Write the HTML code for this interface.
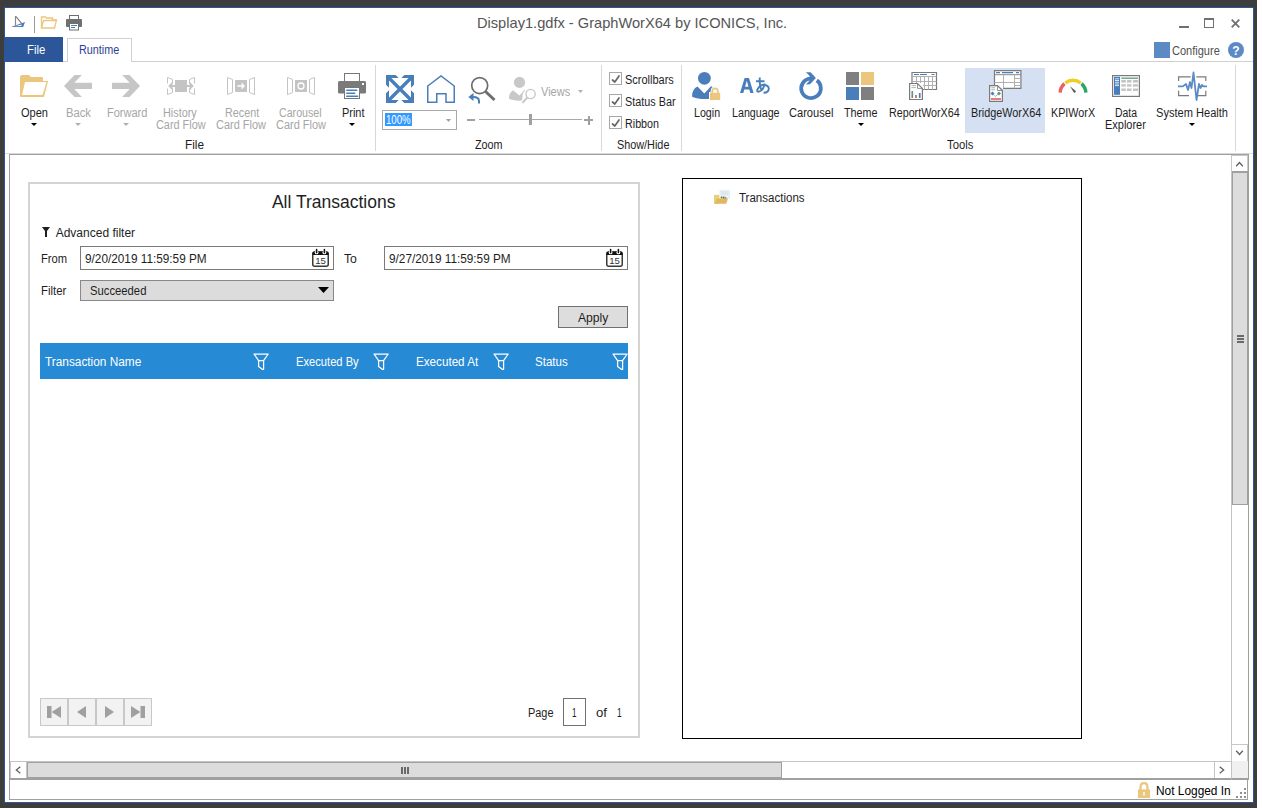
<!DOCTYPE html>
<html><head><meta charset="utf-8"><title>GraphWorX64</title><style>
*{margin:0;padding:0;box-sizing:border-box}
html,body{width:1262px;height:808px;overflow:hidden;background:#3d3d3d;font-family:'Liberation Sans', sans-serif}
body>div,body>svg,body>span{position:absolute}
.t{position:absolute;white-space:pre;line-height:1;transform-origin:0 0}
svg{overflow:visible}
</style></head><body>
<div style="left:1257px;top:0px;width:5px;height:808px;background:#fff"></div>
<div style="left:4px;top:7px;width:1250px;height:796px;background:#fff;border:1px solid #2b579a"></div>
<svg style="left:11px;top:15px;" width="15" height="13" viewBox="0 0 15 13"><path d="M4.5 1 V10.5" stroke="#8a8a8a" stroke-width="1.2"/><path d="M5 1.5 L11 9" stroke="#6a6a6a" stroke-width="1.1"/><path d="M0 12 L14 7 L12.2 12 Z M4 11.3 L10.8 9.6 L10.2 11 Z" fill="#4a7ebb" fill-rule="evenodd"/></svg>
<div style="left:34px;top:16px;width:1px;height:17px;background:#9a9a9a"></div>
<svg style="left:41px;top:16px;" width="17" height="13" viewBox="0 0 17 13"><path d="M0.5 12 V1 H4.5 L5.5 2 H11.5 V4 H15.5 L13.5 12 Z" fill="none" stroke="#ebc67c" stroke-width="1.3"/><path d="M0.5 12 L2.5 4.5 H15.5" fill="none" stroke="#ebc67c" stroke-width="1.3"/></svg>
<svg style="left:66px;top:15px;" width="17" height="16" viewBox="0 0 17 16"><rect x="3.5" y="0.5" width="9" height="4" fill="#fff" stroke="#6f6f6f"/><rect x="0" y="4" width="16" height="8" rx="1" fill="#6f6f6f"/><rect x="3.5" y="8.5" width="9" height="6.5" fill="#fff" stroke="#6f6f6f"/><path d="M5 10.5 H11 M5 12.5 H9" stroke="#4a7ebb"/></svg>
<span class="t" style="left:477.40px;top:15.00px;font-size:15px;color:#555555;transform:scaleX(0.9749);">Display1.gdfx - GraphWorX64 by ICONICS, Inc.</span>
<div style="left:1179px;top:26px;width:10px;height:2px;background:#707070"></div>
<div style="left:1204px;top:18px;width:10px;height:10px;border:1px solid #707070;border-top-width:2px"></div>
<svg style="left:1231px;top:19px;" width="9" height="9" viewBox="0 0 9 9"><path d="M0.7 0.7 L8.3 8.3 M8.3 0.7 L0.7 8.3" stroke="#707070" stroke-width="1.8"/></svg>
<div style="left:5px;top:61px;width:1248px;height:1px;background:#d0d0d0"></div>
<div style="left:5px;top:37px;width:58px;height:25px;background:#2b579a"></div>
<span class="t" style="left:26.70px;top:44.00px;font-size:12px;color:#fff;transform:scaleX(0.9460);">File</span>
<div style="left:67px;top:38px;width:65px;height:24px;background:#fff;border:1px solid #d0d0d0;border-bottom:none"></div>
<span class="t" style="left:78.70px;top:44.00px;font-size:12px;color:#2e3f96;transform:scaleX(0.9018);">Runtime</span>
<div style="left:1154px;top:42px;width:16px;height:16px;background:#5b8ac4"></div>
<span class="t" style="left:1172.40px;top:45.00px;font-size:12px;color:#505050;transform:scaleX(0.9187);">Configure</span>
<svg style="left:1228px;top:42px;" width="16" height="16" viewBox="0 0 16 16"><circle cx="8" cy="8" r="8" fill="#5b8ac4"/><text x="8" y="12.6" text-anchor="middle" font-family="Liberation Sans" font-weight="bold" font-size="12" fill="#fff">?</text></svg>
<div style="left:5px;top:153px;width:1248px;height:1px;background:#d8d8d8"></div>
<div style="left:375px;top:65px;width:1px;height:86px;background:#d8d8d8"></div>
<div style="left:601px;top:65px;width:1px;height:86px;background:#d8d8d8"></div>
<div style="left:681px;top:65px;width:1px;height:86px;background:#d8d8d8"></div>
<div style="left:1235px;top:65px;width:1px;height:86px;background:#d8d8d8"></div>
<svg style="left:20px;top:75px;" width="29" height="23" viewBox="0 0 29 23"><path d="M0 2 Q0 0 2 0 H9 L11 2 H22 Q23 2 23 3 V6 H28 L24 22 H1 Q0 22 0 21 Z" fill="#ebc67c"/><path d="M5 7 H26.5 L22.5 20 H2 Z" fill="#fff"/></svg>
<span class="t" style="left:20.90px;top:107.00px;font-size:12px;color:#1e1e1e;transform:scaleX(0.9196);">Open</span>
<svg style="left:30.5px;top:123px;" width="6" height="3" viewBox="0 0 6 3"><path d="M0 0 H6 L3 3 Z" fill="#000"/></svg>
<svg style="left:64px;top:75px;" width="28" height="22" viewBox="0 0 28 22"><path d="M10.5 0 H17.9 L10.3 7.8 H28 V13.9 H10.3 L17.9 22 H10.5 L0 11 Z" fill="#c6c6c6"/></svg>
<span class="t" style="left:65.80px;top:107.00px;font-size:12px;color:#a6a6a6;transform:scaleX(0.9368);">Back</span>
<svg style="left:75px;top:123px;" width="6" height="3" viewBox="0 0 6 3"><path d="M0 0 H6 L3 3 Z" fill="#b0b0b0"/></svg>
<svg style="left:112px;top:75px;" width="28" height="22" viewBox="0 0 28 22"><path d="M17.5 0 H10.1 L17.7 7.8 H0 V13.9 H17.7 L10.1 22 H17.5 L28 11 Z" fill="#c6c6c6"/></svg>
<span class="t" style="left:106.60px;top:107.00px;font-size:12px;color:#a6a6a6;transform:scaleX(0.9179);">Forward</span>
<svg style="left:123px;top:123px;" width="6" height="3" viewBox="0 0 6 3"><path d="M0 0 H6 L3 3 Z" fill="#b0b0b0"/></svg>
<svg style="left:167px;top:77px;" width="28" height="18" viewBox="0 0 28 18"><path d="M0.5 0.5 L5.5 2.5 V15.5 L0.5 17.5 Z M27.5 0.5 L22.5 2.5 V15.5 L27.5 17.5 Z" fill="none" stroke="#c4c4c4"/><rect x="8" y="3" width="12" height="12" fill="#c4c4c4"/><path d="M0 9 H8 M20 9 H28" stroke="#fff" stroke-width="5"/><path d="M2.5 9 H25.5 M5.5 6 L2.5 9 L5.5 12 M22.5 6 L25.5 9 L22.5 12" stroke="#c4c4c4" stroke-width="1.8" fill="none"/></svg>
<span class="t" style="left:163.20px;top:107.00px;font-size:12px;color:#a6a6a6;transform:scaleX(0.9051);">History</span>
<span class="t" style="left:156.00px;top:119.00px;font-size:12px;color:#a6a6a6;transform:scaleX(0.9070);">Card Flow</span>
<svg style="left:227px;top:77px;" width="28" height="18" viewBox="0 0 28 18"><path d="M0.5 0.5 L5.5 2.5 V15.5 L0.5 17.5 Z M27.5 0.5 L22.5 2.5 V15.5 L27.5 17.5 Z" fill="none" stroke="#c4c4c4"/><rect x="8" y="3" width="12" height="12" fill="#c4c4c4"/><path d="M10.5 9 H17 M14.5 6.5 L17 9 L14.5 11.5" stroke="#fff" stroke-width="1.4" fill="none"/></svg>
<span class="t" style="left:224.60px;top:107.00px;font-size:12px;color:#a6a6a6;transform:scaleX(0.8993);">Recent</span>
<span class="t" style="left:216.00px;top:119.00px;font-size:12px;color:#a6a6a6;transform:scaleX(0.9125);">Card Flow</span>
<svg style="left:287px;top:77px;" width="28" height="18" viewBox="0 0 28 18"><path d="M0.5 0.5 L5.5 2.5 V15.5 L0.5 17.5 Z M27.5 0.5 L22.5 2.5 V15.5 L27.5 17.5 Z" fill="none" stroke="#c4c4c4"/><rect x="8" y="3" width="12" height="12" fill="#c4c4c4"/><circle cx="14" cy="9" r="3" stroke="#fff" stroke-width="1.3" fill="none"/></svg>
<span class="t" style="left:279.40px;top:107.00px;font-size:12px;color:#a6a6a6;transform:scaleX(0.8869);">Carousel</span>
<span class="t" style="left:276.00px;top:119.00px;font-size:12px;color:#a6a6a6;transform:scaleX(0.9143);">Card Flow</span>
<svg style="left:338px;top:73px;" width="28" height="27" viewBox="0 0 28 27"><rect x="6.5" y="0.5" width="15" height="8" fill="#fff" stroke="#777"/><rect x="0" y="8" width="28" height="12.6" rx="1.5" fill="#7a7a7a"/><rect x="24" y="10" width="2" height="2" fill="#fff"/><rect x="6.5" y="14.5" width="15" height="11" fill="#fff" stroke="#777"/><path d="M8.8 17.3 H18.7 M8.8 20.3 H16.7 M8.8 23.3 H19.7" stroke="#4a7ebb" stroke-width="1.6" stroke-linecap="round"/></svg>
<span class="t" style="left:341.50px;top:107.00px;font-size:12px;color:#1e1e1e;transform:scaleX(0.9114);">Print</span>
<svg style="left:349px;top:123px;" width="6" height="3" viewBox="0 0 6 3"><path d="M0 0 H6 L3 3 Z" fill="#000"/></svg>
<span class="t" style="left:185.00px;top:139.00px;font-size:12px;color:#1e1e1e;transform:scaleX(0.9822);">File</span>
<svg style="left:386px;top:75px;" width="28" height="28" viewBox="0 0 28 28"><g fill="#4a7ebb"><path d="M0 0 H9.7 L12.7 3 H3 V12.7 L0 9.7 Z"/><path d="M28 0 H18.3 L15.3 3 H25 V12.7 L28 9.7 Z"/><path d="M0 28 H9.7 L12.7 25 H3 V15.3 L0 18.3 Z"/><path d="M28 28 H18.3 L15.3 25 H25 V15.3 L28 18.3 Z"/></g><path d="M1.5 1.5 L26.5 26.5 M26.5 1.5 L1.5 26.5" stroke="#4a7ebb" stroke-width="3.4"/></svg>
<svg style="left:427px;top:75px;" width="28" height="28" viewBox="0 0 28 28"><path d="M0.75 27.25 V11 L14 0.9 L27.25 11 V27.25 H19 V18.75 H9.75 V27.25 Z" fill="none" stroke="#4a7ebb" stroke-width="1.5" stroke-linejoin="miter"/></svg>
<svg style="left:468px;top:76px;" width="29" height="29" viewBox="0 0 29 29"><circle cx="11.7" cy="9.6" r="8" fill="none" stroke="#6e6e6e" stroke-width="1.7"/><path d="M17.5 15.5 L26.5 24" stroke="#6e6e6e" stroke-width="3"/><path d="M11 27.5 V25 Q11 21 5 21" fill="none" stroke="#4a7ebb" stroke-width="2"/><path d="M0.3 21 L5.5 17 V25 Z" fill="#4a7ebb"/></svg>
<svg style="left:509px;top:76px;" width="28" height="28" viewBox="0 0 28 28"><circle cx="10.5" cy="6.4" r="5.6" fill="#c8c8c8"/><path d="M0 22.5 Q0 16.5 4 14.2 L10.5 19.5 L15.5 14 Q16 14.2 16.5 14.5 Q13 17 13.5 21 L13 24.5 Q10.5 24.8 7 24.5 Q0 23.5 0 22.5 Z" fill="#c8c8c8"/><circle cx="21.6" cy="18" r="4.6" fill="#fff" stroke="#c8c8c8" stroke-width="1.4"/><path d="M18.3 21.5 L13.5 26.8" stroke="#c8c8c8" stroke-width="2"/></svg>
<span class="t" style="left:540.80px;top:86.00px;font-size:12px;color:#a6a6a6;transform:scaleX(0.9183);">Views</span>
<svg style="left:578px;top:90px;" width="5" height="3" viewBox="0 0 5 3"><path d="M0 0 H5 L2.5 3 Z" fill="#b0b0b0"/></svg>
<div style="left:382px;top:110px;width:75px;height:20px;background:#fff;border:1px solid #a8a8a8"></div>
<div style="left:385px;top:113px;width:27px;height:13px;background:#3399ff"></div>
<span class="t" style="left:386.30px;top:114.00px;font-size:12.5px;color:#fff;transform:scaleX(0.7691);">100%</span>
<svg style="left:446px;top:119px;" width="5" height="3" viewBox="0 0 5 3"><path d="M0 0 H5 L2.5 3 Z" fill="#a0a0a0"/></svg>
<div style="left:467px;top:119px;width:8px;height:2px;background:#a0a0a0"></div>
<div style="left:479px;top:119px;width:103px;height:1px;background:#a8a8a8"></div>
<div style="left:529px;top:114px;width:3px;height:11px;background:#a0a0a0"></div>
<div style="left:584px;top:119px;width:9px;height:2px;background:#a0a0a0"></div>
<div style="left:587.5px;top:115.5px;width:2px;height:9px;background:#a0a0a0"></div>
<span class="t" style="left:475.00px;top:139.00px;font-size:12px;color:#1e1e1e;transform:scaleX(0.8994);">Zoom</span>
<div style="left:609px;top:72px;width:13px;height:13px;background:#fff;border:1px solid #a8a8a8"></div>
<svg style="left:611px;top:75px;" width="9" height="8" viewBox="0 0 9 8"><path d="M1.5 5 L3.8 7 L8 1" fill="none" stroke="#666" stroke-width="1.7" stroke-linecap="round" stroke-linejoin="round"/></svg>
<div style="left:609px;top:94px;width:13px;height:13px;background:#fff;border:1px solid #a8a8a8"></div>
<svg style="left:611px;top:97px;" width="9" height="8" viewBox="0 0 9 8"><path d="M1.5 5 L3.8 7 L8 1" fill="none" stroke="#666" stroke-width="1.7" stroke-linecap="round" stroke-linejoin="round"/></svg>
<div style="left:609px;top:116px;width:13px;height:13px;background:#fff;border:1px solid #a8a8a8"></div>
<svg style="left:611px;top:119px;" width="9" height="8" viewBox="0 0 9 8"><path d="M1.5 5 L3.8 7 L8 1" fill="none" stroke="#666" stroke-width="1.7" stroke-linecap="round" stroke-linejoin="round"/></svg>
<span class="t" style="left:625.30px;top:74.00px;font-size:12px;color:#1e1e1e;transform:scaleX(0.9146);">Scrollbars</span>
<span class="t" style="left:625.30px;top:96.00px;font-size:12px;color:#1e1e1e;transform:scaleX(0.9013);">Status Bar</span>
<span class="t" style="left:625.30px;top:118.00px;font-size:12px;color:#1e1e1e;transform:scaleX(0.8940);">Ribbon</span>
<span class="t" style="left:616.60px;top:139.00px;font-size:12px;color:#1e1e1e;transform:scaleX(0.9030);">Show/Hide</span>
<svg style="left:692px;top:72px;" width="29" height="29" viewBox="0 0 29 29"><circle cx="12.4" cy="6.3" r="6.4" fill="#4a7ebb"/><path d="M0 24.5 Q0 17 5.5 14.5 L12.3 21.5 L19 14.2 Q20.6 14.6 21.3 15.6 L17.6 27 Q10 27.2 6 26.4 Q1 25.5 0 24.5 Z" fill="#4a7ebb"/><rect x="17" y="20" width="12" height="9" fill="#fff"/><path d="M20.3 21 V19.5 Q20.3 16.3 23.1 16.3 Q25.9 16.3 25.9 19.5 V21" fill="none" stroke="#fff" stroke-width="3.4"/><path d="M20.3 21 V19.5 Q20.3 16.3 23.1 16.3 Q25.9 16.3 25.9 19.5 V21" fill="none" stroke="#ebc67c" stroke-width="1.7"/><rect x="18" y="20.8" width="10.2" height="7.2" fill="#ebc67c"/></svg>
<span class="t" style="left:693.50px;top:107.00px;font-size:12px;color:#1e1e1e;transform:scaleX(0.8885);">Login</span>
<svg style="left:740px;top:77px;" width="30" height="17" viewBox="0 0 30 17"><path d="M4.6 1 H9 L13.6 16 H10.3 L9.3 12.5 H4.3 L3.3 16 H0 Z M5.1 9.8 H8.5 L6.8 3.8 Z" fill="#4a7ebb" fill-rule="evenodd"/><path d="M16 4.2 H24.5 M19.8 0.5 Q19.2 9 21.5 13.5 M25.5 7.5 Q21 7 18 11.5 Q16 14.8 18.5 14.8 Q23 14 24.5 7.5 M23.5 8 Q28.8 8 28.8 11.8 Q28.5 15.5 23.5 15.8" fill="none" stroke="#4a7ebb" stroke-width="1.9"/></svg>
<span class="t" style="left:732.30px;top:107.00px;font-size:12px;color:#1e1e1e;transform:scaleX(0.8897);">Language</span>
<svg style="left:795px;top:68px;" width="33" height="36" viewBox="0 0 33 36"><path d="M21.76 12.37 A9.8 9.8 0 1 1 15.15 10.54" fill="none" stroke="#4a7ebb" stroke-width="3.8"/><path d="M10.9 4.2 L15.6 4.2 L20.9 10 L15 16.3 L10.9 16.5 L14.2 12.9 L14.7 8 Z" fill="#4a7ebb"/></svg>
<span class="t" style="left:789.00px;top:107.00px;font-size:12px;color:#1e1e1e;transform:scaleX(0.9244);">Carousel</span>
<svg style="left:846px;top:72px;" width="28" height="28" viewBox="0 0 28 28"><rect x="0" y="0" width="13" height="13" fill="#7f7f7f"/><rect x="15" y="0" width="13" height="13" fill="#ebc67c"/><rect x="0" y="15" width="13" height="13" fill="#4a7ebb"/><rect x="15" y="15" width="13" height="13" fill="#7f7f7f"/></svg>
<span class="t" style="left:843.50px;top:107.00px;font-size:12px;color:#1e1e1e;transform:scaleX(0.8967);">Theme</span>
<svg style="left:857.5px;top:123px;" width="6" height="3" viewBox="0 0 6 3"><path d="M0 0 H6 L3 3 Z" fill="#000"/></svg>
<svg style="left:909px;top:71px;" width="30" height="30" viewBox="0 0 30 30"><path d="M3 12 V1.5 H27.5 V18.5 H14" fill="#fff" stroke="#7a7a7a" stroke-width="1.2"/><path d="M3 5.5 H27.5 M3 10.5 H27.5 M14 14.5 H27.5 M7.5 5.5 V12 M11.5 5.5 V12 M15.5 5.5 V18.5 M19.5 5.5 V18.5 M23.5 5.5 V18.5" stroke="#b0b0b0" stroke-width="1"/><path d="M5 3.5 H10 M11 3.5 H18 M22.5 3.5 H25.5" stroke="#4a7ebb" stroke-width="1.1"/><path d="M0.6 12.5 H8.5 L13.4 17.4 V28.5 H0.6 Z" fill="#fff" stroke="#7a7a7a" stroke-width="1.2"/><path d="M8.5 12.5 V17.4 H13.4" fill="none" stroke="#7a7a7a" stroke-width="0.8"/><path d="M2.5 14.6 H7 M2.5 16.6 H7" stroke="#b0b0b0" stroke-width="0.9"/><path d="M3.3 20 V27" stroke="#5c9a7c" stroke-width="1.7"/><path d="M7 24 V27" stroke="#d86060" stroke-width="1.7"/><path d="M10.7 22 V27" stroke="#4a7ebb" stroke-width="1.7"/></svg>
<span class="t" style="left:888.80px;top:107.00px;font-size:12px;color:#1e1e1e;transform:scaleX(0.8932);">ReportWorX64</span>
<div style="left:965px;top:68px;width:80px;height:65px;background:#d5e1f2"></div>
<svg style="left:989px;top:70px;" width="33" height="33" viewBox="0 0 33 33"><path d="M5.5 15 V0.6 H31.9 V18.4 H14" fill="#fff" stroke="#7a7a7a" stroke-width="1.2"/><path d="M5.5 4.7 H31.9" stroke="#7a7a7a" stroke-width="0.9"/><path d="M5.5 12.5 H31.9 M14.5 4.7 V18.4 M25.5 4.7 V18.4 M25.5 8.5 H31.9 M25.5 15.5 H31.9" stroke="#b0b0b0" stroke-width="1"/><path d="M7 2.6 H11 M13 2.6 H24 M27 2.6 H30" stroke="#4a7ebb" stroke-width="1.1"/><path d="M0.6 15.6 H8.5 L13.4 20.5 V31.4 H0.6 Z" fill="#fff" stroke="#7a7a7a" stroke-width="1.2"/><path d="M8.5 15.6 V20.5 H13.4" fill="none" stroke="#7a7a7a" stroke-width="0.8"/><path d="M2.3 17.8 H6 M2.3 19.8 H6" stroke="#b0b0b0" stroke-width="1.1"/><path d="M3.5 23.5 L6.3 26.5 L10 23.5" stroke="#a8a8a8" stroke-width="0.9" fill="none"/><path d="M3.5 21.5 L5.5 23.5 L3.5 25.5 L1.5 23.5 Z" fill="#4a7ebb"/><path d="M10 21.5 L12 23.5 L10 25.5 L8 23.5 Z" fill="#5c9a7c"/><path d="M1.8 29 H12" stroke="#d86060" stroke-width="1.6"/></svg>
<span class="t" style="left:970.60px;top:107.00px;font-size:12px;color:#1e1e1e;transform:scaleX(0.9020);">BridgeWorX64</span>
<svg style="left:1058px;top:78px;" width="30" height="16" viewBox="0 0 30 16"><path d="M2.2 14.6 A12.3 12.3 0 0 1 6.5 5.6" fill="none" stroke="#e86262" stroke-width="3.4"/><path d="M7.3 5 A12.3 12.3 0 0 1 22.7 5" fill="none" stroke="#f2cc20" stroke-width="3.4"/><path d="M23.5 5.6 A12.3 12.3 0 0 1 27.8 14.6" fill="none" stroke="#25a866" stroke-width="3.4"/><path d="M12 8.3 L17.8 13 Q18 15 16 14.8 Z" fill="#555"/></svg>
<span class="t" style="left:1051.30px;top:107.00px;font-size:12px;color:#1e1e1e;transform:scaleX(0.8977);">KPIWorX</span>
<svg style="left:1112px;top:75px;" width="28" height="22" viewBox="0 0 28 22"><rect x="0.6" y="0.6" width="26.8" height="20.8" fill="#fff" stroke="#7a7a7a" stroke-width="1.2"/><rect x="2" y="1.8" width="6" height="18" fill="#4a7ebb"/><path d="M3 3.8 H7 M3 5.5 H7 M3 7.2 H7 M3 9 H7 M3 10.6 H7" stroke="#fff" stroke-width="0.8"/><path d="M9.3 3.2 H26" stroke="#5c9a7c" stroke-width="1.3"/><g fill="#c4c4c4"><rect x="9.3" y="5" width="4.5" height="2.6"/><rect x="15" y="5" width="4.5" height="2.6"/><rect x="21" y="5" width="5" height="2.6"/><rect x="9.3" y="9.2" width="4.5" height="2.4"/><rect x="15" y="9.2" width="4.5" height="2.4"/><rect x="21" y="9.2" width="5" height="2.4"/><rect x="9.3" y="13.5" width="4.5" height="2.5"/><rect x="15" y="13.5" width="4.5" height="2.5"/><rect x="21" y="13.5" width="5" height="2.5"/></g></svg>
<span class="t" style="left:1114.50px;top:107.00px;font-size:12px;color:#1e1e1e;transform:scaleX(0.8675);">Data</span>
<span class="t" style="left:1105.20px;top:119.00px;font-size:12px;color:#1e1e1e;transform:scaleX(0.9130);">Explorer</span>
<svg style="left:1178px;top:72px;" width="29" height="29" viewBox="0 0 29 29"><path d="M0.6 9 V4.8 H12.7 M18.3 4.8 H27.8 V9 M0.6 18.7 V23.6 H11 M20 23.6 H27.8 V18.7" fill="none" stroke="#7a7a7a" stroke-width="1.2"/><path d="M0 14.4 H4.8 L8 12 L10 18 L12 10 L13.5 16 L15.5 0.5 L18.5 28 L21 12 L22.5 16 L24 13 L25.5 14.4 H29" fill="none" stroke="#5b8ac4" stroke-width="1.8" stroke-linejoin="round"/></svg>
<span class="t" style="left:1156.00px;top:107.00px;font-size:12px;color:#1e1e1e;transform:scaleX(0.9227);">System Health</span>
<svg style="left:1188.5px;top:123px;" width="6" height="3" viewBox="0 0 6 3"><path d="M0 0 H6 L3 3 Z" fill="#000"/></svg>
<span class="t" style="left:946.70px;top:139.00px;font-size:12px;color:#1e1e1e;transform:scaleX(0.9388);">Tools</span>
<div style="left:9px;top:154px;width:1240px;height:626px;border:1px solid #a0a0a0;border-bottom:none;background:#fff"></div>
<div style="left:28px;top:182px;width:612px;height:556px;border:2px solid #d4d4d4"></div>
<span class="t" style="left:271.90px;top:194.00px;font-size:17.5px;color:#1e1e1e;">All Transactions</span>
<svg style="left:42px;top:227px;" width="8" height="10" viewBox="0 0 8 10"><path d="M0 0 H8 L5 4 V10 H3 V4 Z" fill="#1e1e1e"/></svg>
<span class="t" style="left:55.70px;top:227.00px;font-size:12px;color:#1e1e1e;">Advanced filter</span>
<span class="t" style="left:40.60px;top:253.00px;font-size:12px;color:#1e1e1e;transform:scaleX(0.9321);">From</span>
<div style="left:80px;top:246px;width:254px;height:24px;border:1px solid #7a7a7a;background:#fff"></div>
<span class="t" style="left:85.30px;top:253.00px;font-size:12px;color:#1e1e1e;transform:scaleX(0.9824);">9/20/2019 11:59:59 PM</span>
<svg style="left:312px;top:249px;" width="17" height="18" viewBox="0 0 17 18"><rect x="0.75" y="3" width="15.5" height="14.2" rx="2" fill="#fff" stroke="#3a3a3a" stroke-width="1.5"/><path d="M0.5 6 V4.5 Q0.5 2.5 2.5 2.5 H14.5 Q16.5 2.5 16.5 4.5 V6 Z" fill="#111"/><circle cx="4.6" cy="3.4" r="1.9" fill="#fff"/><circle cx="12.4" cy="3.4" r="1.9" fill="#fff"/><path d="M4.6 0.6 V3.6 M12.4 0.6 V3.6" stroke="#111" stroke-width="1.6" stroke-linecap="round"/><text x="8.6" y="15" text-anchor="middle" font-family="Liberation Sans" font-size="9.6" fill="#333">15</text></svg>
<span class="t" style="left:344.30px;top:253.00px;font-size:12px;color:#1e1e1e;transform:scaleX(1.0167);">To</span>
<div style="left:384px;top:246px;width:244px;height:24px;border:1px solid #7a7a7a;background:#fff"></div>
<span class="t" style="left:389.30px;top:253.00px;font-size:12px;color:#1e1e1e;transform:scaleX(0.9824);">9/27/2019 11:59:59 PM</span>
<svg style="left:606px;top:249px;" width="17" height="18" viewBox="0 0 17 18"><rect x="0.75" y="3" width="15.5" height="14.2" rx="2" fill="#fff" stroke="#3a3a3a" stroke-width="1.5"/><path d="M0.5 6 V4.5 Q0.5 2.5 2.5 2.5 H14.5 Q16.5 2.5 16.5 4.5 V6 Z" fill="#111"/><circle cx="4.6" cy="3.4" r="1.9" fill="#fff"/><circle cx="12.4" cy="3.4" r="1.9" fill="#fff"/><path d="M4.6 0.6 V3.6 M12.4 0.6 V3.6" stroke="#111" stroke-width="1.6" stroke-linecap="round"/><text x="8.6" y="15" text-anchor="middle" font-family="Liberation Sans" font-size="9.6" fill="#333">15</text></svg>
<span class="t" style="left:40.60px;top:285.00px;font-size:12px;color:#1e1e1e;transform:scaleX(0.9486);">Filter</span>
<div style="left:80px;top:280px;width:254px;height:21px;border:1px solid #888;background:#dcdcdc"></div>
<span class="t" style="left:90.00px;top:285.00px;font-size:12px;color:#1e1e1e;transform:scaleX(0.9393);">Succeeded</span>
<svg style="left:318px;top:287px;" width="11" height="6" viewBox="0 0 11 6"><path d="M0 0 H11 L5.5 6 Z" fill="#000"/></svg>
<div style="left:558px;top:306px;width:70px;height:22px;border:1px solid #707070;background:#dddddd"></div>
<span class="t" style="left:577.80px;top:312.00px;font-size:12px;color:#1e1e1e;transform:scaleX(1.0123);">Apply</span>
<div style="left:40px;top:343px;width:588px;height:36px;background:#278ad4"></div>
<div style="left:40px;top:343px;width:588px;height:36px;overflow:hidden"><svg style="position:absolute;left:213px;top:10px" width="17" height="18" viewBox="0 0 17 18"><path d="M1 1 H15.2 L10.6 7.6 H5.6 Z M5.6 7.6 V13.4 L9.6 16.4 H10.6 V7.6" fill="none" stroke="#fff" stroke-width="1.25" stroke-linejoin="round"/></svg><svg style="position:absolute;left:333px;top:10px" width="17" height="18" viewBox="0 0 17 18"><path d="M1 1 H15.2 L10.6 7.6 H5.6 Z M5.6 7.6 V13.4 L9.6 16.4 H10.6 V7.6" fill="none" stroke="#fff" stroke-width="1.25" stroke-linejoin="round"/></svg><svg style="position:absolute;left:453px;top:10px" width="17" height="18" viewBox="0 0 17 18"><path d="M1 1 H15.2 L10.6 7.6 H5.6 Z M5.6 7.6 V13.4 L9.6 16.4 H10.6 V7.6" fill="none" stroke="#fff" stroke-width="1.25" stroke-linejoin="round"/></svg><svg style="position:absolute;left:572px;top:10px" width="17" height="18" viewBox="0 0 17 18"><path d="M1 1 H15.2 L10.6 7.6 H5.6 Z M5.6 7.6 V13.4 L9.6 16.4 H10.6 V7.6" fill="none" stroke="#fff" stroke-width="1.25" stroke-linejoin="round"/></svg></div>
<span class="t" style="left:45.00px;top:356.00px;font-size:12px;color:#fff;transform:scaleX(0.9867);">Transaction Name</span>
<span class="t" style="left:295.70px;top:356.00px;font-size:12px;color:#fff;transform:scaleX(0.9306);">Executed By</span>
<span class="t" style="left:415.50px;top:356.00px;font-size:12px;color:#fff;transform:scaleX(0.9712);">Executed At</span>
<span class="t" style="left:534.70px;top:356.00px;font-size:12px;color:#fff;transform:scaleX(0.9638);">Status</span>
<div style="left:40px;top:698px;width:112px;height:28px;border:1px solid #c8c8c8;background:#f2f2f2"></div>
<div style="left:67px;top:698px;width:2px;height:28px;background:#c8c8c8"></div>
<div style="left:95px;top:698px;width:2px;height:28px;background:#c8c8c8"></div>
<div style="left:123px;top:698px;width:2px;height:28px;background:#c8c8c8"></div>
<svg style="left:47px;top:706px;" width="15" height="12" viewBox="0 0 15 12"><rect x="0" y="0" width="4.5" height="12" fill="#a0a0a0"/><path d="M14 0 V12 L4.5 6 Z" fill="#a0a0a0"/></svg>
<svg style="left:77px;top:706px;" width="9" height="12" viewBox="0 0 9 12"><path d="M9 0 V12 L0 6 Z" fill="#a0a0a0"/></svg>
<svg style="left:105px;top:706px;" width="9" height="12" viewBox="0 0 9 12"><path d="M0 0 V12 L9 6 Z" fill="#a0a0a0"/></svg>
<svg style="left:130px;top:706px;" width="15" height="12" viewBox="0 0 15 12"><rect x="10.5" y="0" width="4.5" height="12" fill="#a0a0a0"/><path d="M1 0 V12 L10.5 6 Z" fill="#a0a0a0"/></svg>
<span class="t" style="left:527.70px;top:707.00px;font-size:12px;color:#1e1e1e;transform:scaleX(0.9097);">Page</span>
<div style="left:563px;top:698px;width:23px;height:28px;border:1px solid #707070;background:#fff"></div>
<span class="t" style="left:572.00px;top:707.00px;font-size:12px;color:#1e1e1e;transform:scaleX(0.6729);">1</span>
<span class="t" style="left:595.70px;top:707.00px;font-size:12px;color:#1e1e1e;transform:scaleX(1.0983);">of</span>
<span class="t" style="left:617.30px;top:707.00px;font-size:12px;color:#1e1e1e;transform:scaleX(0.7028);">1</span>
<div style="left:682px;top:178px;width:400px;height:561px;border:1px solid #000"></div>
<svg style="left:710px;top:185px;" width="26" height="22" viewBox="0 0 26 22"><rect x="4" y="9.8" width="5.5" height="9" fill="#e6d27a"/><path d="M9.5 4.8 H20 V13.8 H9.5 Z" fill="#e9f0f5"/><path d="M11 7 H18.5 M11 9 H18.5" stroke="#cfdbe4" stroke-width="0.8"/><circle cx="11.6" cy="12.4" r="1" fill="#2a9a4a"/><rect x="12.9" y="11.6" width="1.6" height="2.4" fill="#d04545"/><circle cx="15.6" cy="13" r="0.9" fill="#3a9ad0"/><path d="M6.8 13.6 H18 L16.2 18.8 H4.5 Z" fill="#e0b860"/></svg>
<span class="t" style="left:739.20px;top:192.00px;font-size:12px;color:#1e1e1e;transform:scaleX(0.9612);">Transactions</span>
<div style="left:1231px;top:155px;width:18px;height:606px;background:#fff;border-left:1px solid #c4c4c4;border-right:1px solid #a0a0a0"></div>
<div style="left:1231px;top:155px;width:17px;height:17px;background:#fff;border:1px solid #c8c8c8;border-bottom:none"></div>
<svg style="left:1235px;top:161px;" width="9" height="6" viewBox="0 0 9 6"><path d="M1.2 5.2 L4.5 1.5 L7.8 5.2" fill="none" stroke="#606060" stroke-width="1.3"/></svg>
<div style="left:1232px;top:171px;width:16px;height:334px;background:#dcdcdc;border:1px solid #a0a0a0;border-width:2px 1px 1px 1px"></div>
<div style="left:1236.5px;top:335px;width:7px;height:1.6px;background:#6a6a6a"></div>
<div style="left:1236.5px;top:338px;width:7px;height:1.6px;background:#6a6a6a"></div>
<div style="left:1236.5px;top:341px;width:7px;height:1.6px;background:#6a6a6a"></div>
<div style="left:1231px;top:744px;width:17px;height:17px;background:#fff;border:1px solid #c8c8c8;border-bottom:none"></div>
<svg style="left:1235px;top:750px;" width="9" height="6" viewBox="0 0 9 6"><path d="M1.2 0.8 L4.5 4.5 L7.8 0.8" fill="none" stroke="#606060" stroke-width="1.3"/></svg>
<div style="left:10px;top:761px;width:1221px;height:19px;background:#fff;border-top:1px solid #c4c4c4;border-bottom:2px solid #a0a0a0"></div>
<div style="left:10px;top:762px;width:1px;height:16px;background:#c8c8c8"></div>
<div style="left:26px;top:762px;width:1px;height:16px;background:#c8c8c8"></div>
<svg style="left:15px;top:766px;" width="6" height="8" viewBox="0 0 6 8"><path d="M5.3 0.7 L1.3 4 L5.3 7.3" fill="none" stroke="#606060" stroke-width="1.3"/></svg>
<div style="left:27px;top:762px;width:755px;height:16px;background:#dcdcdc;border:1px solid #a0a0a0"></div>
<div style="left:401px;top:766.5px;width:1.6px;height:7px;background:#6a6a6a"></div>
<div style="left:404px;top:766.5px;width:1.6px;height:7px;background:#6a6a6a"></div>
<div style="left:407px;top:766.5px;width:1.6px;height:7px;background:#6a6a6a"></div>
<div style="left:1214px;top:762px;width:1px;height:16px;background:#c4c4c4"></div>
<svg style="left:1219px;top:766px;" width="6" height="8" viewBox="0 0 6 8"><path d="M0.7 0.7 L4.7 4 L0.7 7.3" fill="none" stroke="#606060" stroke-width="1.3"/></svg>
<div style="left:1231px;top:761px;width:18px;height:19px;background:#f0f0f0;border-left:1px solid #c4c4c4;border-right:1px solid #a0a0a0;border-bottom:2px solid #a0a0a0"></div>
<div style="left:9px;top:780px;width:1239px;height:20px;background:#fff;border:1px solid #a0a0a0;border-top:none"></div>
<svg style="left:1138px;top:782px;" width="12" height="16" viewBox="0 0 12 16"><path d="M2.5 8 V5.5 Q2.5 1.2 6 1.2 Q9.5 1.2 9.5 5.5 V8" fill="none" stroke="#ebc67c" stroke-width="2.2"/><rect x="0" y="7.5" width="12" height="8.5" fill="#ebc67c"/><rect x="5.3" y="10" width="1.4" height="3.5" fill="#fff"/></svg>
<span class="t" style="left:1155.80px;top:785.00px;font-size:12px;color:#000;transform:scaleX(0.9906);">Not Logged In</span>
<div style="left:1244px;top:788px;width:2px;height:2px;background:#909090"></div>
<div style="left:1240px;top:792px;width:2px;height:2px;background:#909090"></div>
<div style="left:1244px;top:792px;width:2px;height:2px;background:#909090"></div>
<div style="left:1236px;top:796px;width:2px;height:2px;background:#909090"></div>
<div style="left:1240px;top:796px;width:2px;height:2px;background:#909090"></div>
<div style="left:1244px;top:796px;width:2px;height:2px;background:#909090"></div>
</body></html>
